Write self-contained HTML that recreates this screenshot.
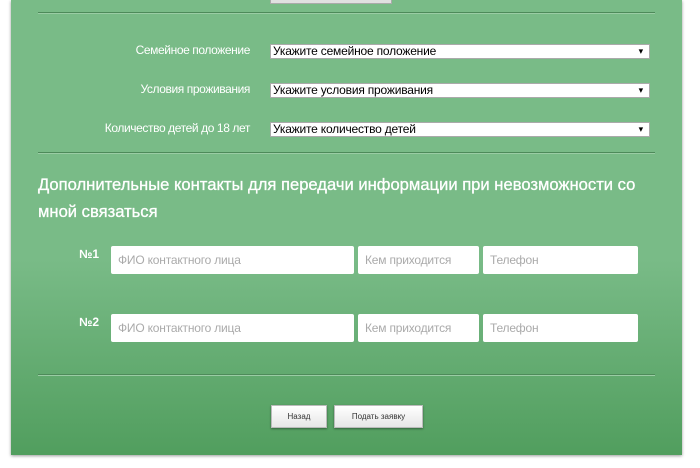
<!DOCTYPE html>
<html><head><meta charset="utf-8"><style>
body{margin:0;width:700px;height:468px;background:#fff;font-family:"Liberation Sans",sans-serif;overflow:hidden;position:relative}
.p{position:absolute;left:11px;top:0;width:671px;height:455px;background:linear-gradient(#79bb87 0px,#79bb87 260px,#519e5e 455px);box-shadow:0 1px 3px rgba(0,0,0,.4)}
.a{position:absolute}
.hr{position:absolute;left:27px;width:617px;height:1px;background:#4e8a5a;border-bottom:1px solid #9acca4}
.lbl{position:absolute;right:432px;color:#fff;font-size:12px;letter-spacing:-0.4px}
.sel{position:absolute;left:259px;width:376px;height:13px;background:#fff;border:1px solid #aaa;font-size:12px;line-height:13px;padding-left:2px;color:#000;letter-spacing:-0.2px}
.sel:after{content:"▾";position:absolute;right:6px;top:0;font-size:9px}
.in{position:absolute;height:28px;background:#fff;border-radius:2px;color:#aaa;font-size:12px;line-height:28px;padding-left:7px;box-sizing:border-box;letter-spacing:-0.2px}
.n{position:absolute;left:68px;color:#fff;font-size:12px;font-weight:bold}
.b{position:absolute;top:405px;height:23px;background:linear-gradient(#fff,#e6e6e6);border:1px solid #bbb;box-sizing:border-box;font-size:8px;line-height:21px;text-align:center;color:#333;box-shadow:0 1px 2px rgba(0,0,0,.4)}
</style></head><body>
<div class="p">
<div class="a" style="left:259px;top:-2px;width:120px;height:4px;background:#e0e0e0;border:1px solid #aaa"></div>
<div class="hr" style="top:12px"></div>
<div class="lbl" style="top:43px">Семейное положение</div>
<div class="sel" style="top:44px">Укажите семейное положение</div>
<div class="lbl" style="top:82px">Условия проживания</div>
<div class="sel" style="top:83px">Укажите условия проживания</div>
<div class="lbl" style="top:121px">Количество детей до 18 лет</div>
<div class="sel" style="top:122px">Укажите количество детей</div>
<div class="hr" style="top:152px"></div>
<div class="a" style="left:27px;top:171px;width:612px;color:#fff;font-size:16.6px;line-height:27px;-webkit-text-stroke:0.3px #fff">Дополнительные контакты для передачи информации при невозможности со мной связаться</div>
<div class="n" style="top:247px">№1</div>
<div class="in" style="left:100px;top:246px;width:243px">ФИО контактного лица</div>
<div class="in" style="left:347px;top:246px;width:121px">Кем приходится</div>
<div class="in" style="left:472px;top:246px;width:155px">Телефон</div>
<div class="n" style="top:315px">№2</div>
<div class="in" style="left:100px;top:314px;width:243px">ФИО контактного лица</div>
<div class="in" style="left:347px;top:314px;width:121px">Кем приходится</div>
<div class="in" style="left:472px;top:314px;width:155px">Телефон</div>
<div class="hr" style="top:374px"></div>
<div class="b" style="left:260px;width:56px">Назад</div>
<div class="b" style="left:323px;width:89px">Подать заявку</div>
</div>
</body></html>
